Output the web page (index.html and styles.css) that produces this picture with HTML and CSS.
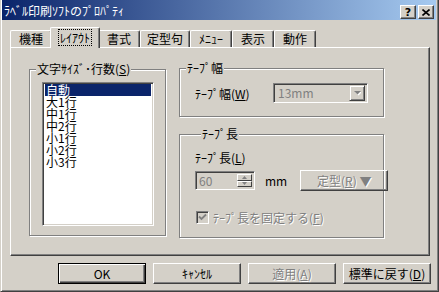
FILE: index.html
```html
<!DOCTYPE html>
<html lang="ja">
<head>
    <meta charset="UTF-8">
    <title>ラベル印刷ソフトのプロパティ</title>
    <link rel="stylesheet" href="styles.css">
</head>
<body>
<div class="window">
    <!-- Title bar -->
    <div class="titlebar">
        <span class="title">ﾗﾍﾞﾙ印刷ｿﾌﾄのﾌﾟﾛﾊﾟﾃｨ</span>
        <div class="caption-buttons">
            <div class="cap-btn help">?</div>
            <div class="cap-btn">
                <svg width="8" height="7" viewBox="0 0 8 7">
                    <path d="M0.5 0.5 L7.5 6.5 M7.5 0.5 L0.5 6.5" stroke="#000" stroke-width="1.6" fill="none"/>
                </svg>
            </div>
        </div>
    </div>

    <div class="client">
        <!-- Tabs -->
        <div class="tabs">
            <div class="tab">機種</div>
            <div class="tab active"><span class="focus">ﾚｲｱｳﾄ</span></div>
            <div class="tab">書式</div>
            <div class="tab">定型句</div>
            <div class="tab">ﾒﾆｭｰ</div>
            <div class="tab">表示</div>
            <div class="tab">動作</div>
        </div>

        <!-- Sheet -->
        <div class="sheet">
            <div class="group size-group">
                <div class="group-title">文字ｻｲｽﾞ･行数(<u>S</u>)</div>
                <ul class="listbox">
                    <li class="selected">自動</li>
                    <li>大1行</li>
                    <li>中1行</li>
                    <li>中2行</li>
                    <li>小1行</li>
                    <li>小2行</li>
                    <li>小3行</li>
                </ul>
            </div>

            <div class="right-col">
                <div class="group width-group">
                    <div class="group-title">ﾃｰﾌﾟ幅</div>
                    <div class="field-row">
                        <span class="field-label">ﾃｰﾌﾟ幅(<u>W</u>)</span>
                        <div class="combo">
                            <span class="combo-text">13mm</span>
                            <div class="combo-btn">
                                <svg width="7" height="5" viewBox="0 0 7 5">
                                    <path d="M1 1 H8 L4.5 4.5 Z" fill="#fff"/>
                                    <path d="M0 0 H7 L3.5 3.5 Z" fill="#808080"/>
                                </svg>
                            </div>
                        </div>
                    </div>
                </div>

                <div class="group length-group">
                    <div class="group-title">ﾃｰﾌﾟ長</div>
                    <div class="length-label">ﾃｰﾌﾟ長(<u>L</u>)</div>
                    <div class="length-row">
                        <div class="spin-edit">
                            <span class="edit-text">60</span>
                            <div class="spin">
                                <div class="spin-btn">
                                    <svg width="5" height="3" viewBox="0 0 5 3"><path d="M2.5 0 L5 3 H0 Z" fill="#808080"/></svg>
                                </div>
                                <div class="spin-btn">
                                    <svg width="5" height="3" viewBox="0 0 5 3"><path d="M0 0 H5 L2.5 3 Z" fill="#808080"/></svg>
                                </div>
                            </div>
                        </div>
                        <span class="unit">mm</span>
                        <div class="btn disabled preset-btn">定型(<u>R</u>) ▼</div>
                    </div>
                    <div class="check-row disabled">
                        <div class="checkbox">
                            <svg width="9" height="9" viewBox="0 0 9 9">
                                <path d="M1 3.5 L3.5 6 L8 1.5" stroke="#808080" stroke-width="1.8" fill="none"/>
                            </svg>
                        </div>
                        <span>ﾃｰﾌﾟ長を固定する(<u>F</u>)</span>
                    </div>
                </div>
            </div>
        </div>

        <!-- Dialog buttons -->
        <div class="buttons">
            <div class="btn default">OK</div>
            <div class="btn">ｷｬﾝｾﾙ</div>
            <div class="btn disabled">適用(<u>A</u>)</div>
            <div class="btn">標準に戻す(<u>D</u>)</div>
        </div>
    </div>
</div>
</body>
</html>
```

FILE: styles.css
```css
/* General */
body {
    margin: 0;
    background: #d4d0c8;
    font-family: "Noto Sans CJK JP", sans-serif;
    font-size: 12px;
    color: #000;
}

u {
    text-decoration: underline;
    text-underline-offset: 1px;
}

/* Window frame */
.window {
    width: 439px;
    height: 292px;
    box-sizing: border-box;
    border-style: solid;
    border-width: 0 1px 1px 1px;
    border-color: #d4d0c8 #404040 #404040 #d4d0c8;
    box-shadow: inset 1px 0 #fff, inset -1px -1px #808080;
    padding: 0 2px 0 1px;
}

/* Title bar */
.titlebar {
    height: 20px;
    display: flex;
    align-items: center;
    justify-content: space-between;
    background: linear-gradient(to right, #0a246a, #a6caf0);
    padding: 0 2px 0 2px;
}

.title {
    color: #fff;
    line-height: 14px;
    padding-top: 2px;
}

.caption-buttons {
    display: flex;
    gap: 2px;
    padding-top: 4px;
}

.cap-btn {
    width: 16px;
    height: 14px;
    box-sizing: border-box;
    background: #d4d0c8;
    border: 1px solid;
    border-color: #fff #404040 #404040 #fff;
    box-shadow: inset -1px -1px #808080;
    display: flex;
    align-items: center;
    justify-content: center;
}

.cap-btn.help {
    font-family: "DejaVu Sans", sans-serif;
    font-weight: bold;
    font-size: 11px;
    line-height: 11px;
}

/* Tabs */
.client {
    padding-left: 8px;
}

.tabs {
    display: flex;
    align-items: flex-end;
    height: 20px;
    margin-top: 7px;
}

.tab {
    height: 17px;
    box-sizing: border-box;
    padding: 0 6px;
    min-width: 42px;
    text-align: center;
    line-height: 15px;
    border-top: 1px solid #fff;
    border-left: 1px solid #fff;
    border-right: 1px solid #404040;
    border-radius: 2px 2px 0 0;
    box-shadow: inset -1px 0 #808080;
    background: #d4d0c8;
}

.tab.active {
    height: 21px;
    min-width: 50px;
    margin: 0 -2px -1px -2px;
    padding: 2px 8px 0;
    position: relative;
    z-index: 1;
    line-height: 14px;
}

.focus {
    display: inline-block;
    outline: 1px dotted #000;
    padding: 0 1px;
    line-height: 15px;
}

/* Property sheet */
.sheet {
    width: 420px;
    height: 209px;
    box-sizing: border-box;
    border: 1px solid;
    border-color: #fff #404040 #404040 #fff;
    box-shadow: inset -1px -1px #808080;
    display: flex;
    align-items: flex-start;
    padding: 21px 0 0 18px;
}

/* Group boxes (etched frame) */
.group {
    box-sizing: border-box;
    border: 1px solid #808080;
    box-shadow: 1px 1px 0 #fff, inset 1px 1px 0 #fff;
    display: flex;
    flex-direction: column;
    align-items: flex-start;
}

.group-title {
    margin: -8px 0 0 6px;
    padding: 0 1px;
    line-height: 14px;
    background: #d4d0c8;
}

.size-group {
    width: 137px;
    height: 167px;
}

.listbox {
    list-style: none;
    margin: 6px 0 0 12px;
    padding: 0;
    width: 112px;
    height: 144px;
    box-sizing: border-box;
    background: #fff;
    border: 1px solid;
    border-color: #808080 #fff #fff #808080;
    box-shadow: inset 1px 1px #404040, inset -1px -1px #d4d0c8;
    padding: 1px 2px 2px;
}

.listbox li {
    line-height: 12px;
    height: 12px;
    padding-left: 1px;
}

.listbox li.selected {
    background: #0a246a;
    color: #fff;
}

.right-col {
    margin: -1px 0 0 13px;
    display: flex;
    flex-direction: column;
    gap: 17px;
}

.width-group {
    width: 205px;
    height: 49px;
}

.field-row {
    display: flex;
    align-items: center;
    margin-top: 8px;
    padding-left: 15px;
}

.field-label {
    width: 78px;
}

/* Disabled combo box */
.combo {
    width: 95px;
    height: 20px;
    box-sizing: border-box;
    border: 1px solid;
    border-color: #808080 #fff #fff #808080;
    box-shadow: inset 1px 1px #404040, inset -1px -1px #d4d0c8;
    padding: 2px;
    display: flex;
    align-items: center;
    justify-content: space-between;
    color: #808080;
}

.combo-text {
    padding-left: 2px;
    line-height: 14px;
}

.combo-btn {
    width: 16px;
    height: 16px;
    box-sizing: border-box;
    border: 1px solid;
    border-color: #d4d0c8 #404040 #404040 #d4d0c8;
    box-shadow: inset 1px 1px #fff, inset -1px -1px #808080;
    display: flex;
    align-items: center;
    justify-content: center;
}

.length-group {
    width: 205px;
    height: 104px;
    padding-left: 15px;
}

.length-label {
    margin-top: 10px;
    line-height: 14px;
}

.length-row {
    display: flex;
    align-items: center;
    margin-top: 5px;
}

.spin-edit {
    width: 60px;
    height: 19px;
    box-sizing: border-box;
    border: 1px solid;
    border-color: #808080 #fff #fff #808080;
    box-shadow: inset 1px 1px #404040, inset -1px -1px #d4d0c8;
    padding: 2px;
    display: flex;
    justify-content: space-between;
    color: #808080;
}

.edit-text {
    line-height: 14px;
    padding-left: 1px;
}

.spin {
    display: flex;
    flex-direction: column;
    width: 15px;
}

.spin-btn {
    height: 8px;
    box-sizing: border-box;
    border: 1px solid;
    border-color: #fff #404040 #404040 #fff;
    display: flex;
    align-items: center;
    justify-content: center;
}

.unit {
    margin: 0 13px 0 10px;
}

.preset-btn {
    width: 75px;
    height: 21px;
}

.check-row {
    display: flex;
    align-items: center;
    gap: 4px;
    margin-top: 18px;
    padding-left: 1px;
}

.checkbox {
    width: 13px;
    height: 13px;
    box-sizing: border-box;
    border: 1px solid;
    border-color: #808080 #fff #fff #808080;
    box-shadow: inset 1px 1px #404040, inset -1px -1px #d4d0c8;
    display: flex;
    align-items: center;
    justify-content: center;
}

.disabled {
    color: #808080;
    text-shadow: 1px 1px 0 #fff;
}

/* Push buttons */
.buttons {
    display: flex;
    justify-content: flex-end;
    gap: 7px;
    margin-top: 7px;
    width: 421px;
}

.btn {
    width: 88px;
    height: 21px;
    box-sizing: border-box;
    border: 1px solid;
    border-color: #fff #404040 #404040 #fff;
    box-shadow: inset -1px -1px #808080;
    display: flex;
    align-items: center;
    justify-content: center;
    line-height: 14px;
}

.btn.default {
    border-color: #000;
    box-shadow: inset 1px 1px #fff, inset -1px -1px #404040, inset -2px -2px #808080;
}
```
